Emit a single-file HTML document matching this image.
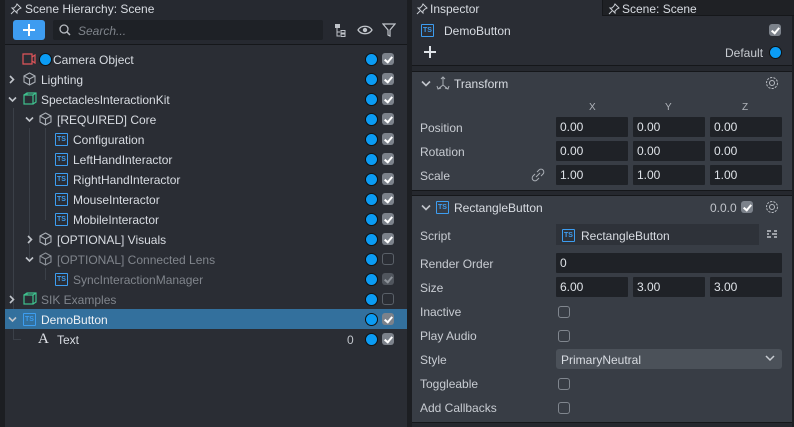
<!DOCTYPE html>
<html><head><meta charset="utf-8"><style>
*{box-sizing:border-box;margin:0;padding:0}
body{width:794px;height:427px;overflow:hidden;background:#1c1e22;font-family:"Liberation Sans",sans-serif;font-size:12px;color:#d8dce2;position:relative}
.a{position:absolute}
.t{position:absolute;white-space:nowrap;line-height:14px}
.dot{position:absolute;width:11px;height:11px;border-radius:50%;background:#0b9cf4;box-shadow:0 0 0 1px #111}
.cb{position:absolute;width:12px;height:12px;border-radius:3px;background:#7c828b}
.cb:after{content:"";position:absolute;left:4px;top:2px;width:3px;height:6px;border:solid #fff;border-width:0 2px 2px 0;transform:rotate(40deg)}
.cb.dim{background:#50555d}.cb.dim:after{border-color:#8d9299}
.cb.off{background:none;border:1.5px solid #5a6068}.cb.off:after{display:none}
.ts{position:absolute;width:13px;height:13px;border:1px solid #3d9df0;border-radius:1px;color:#3d9df0;font-size:7px;line-height:11px;text-align:center;font-weight:bold}
.f{position:absolute;height:20px;background:#1f2227;color:#dfe3e8;padding-left:4px;line-height:20px;border-radius:1px}
.lbl{position:absolute;left:420px;color:#c8ccd2}
.cbx{position:absolute;width:12px;height:12px;border:1.5px solid #80868e;border-radius:3px}
.line{position:absolute;background:#3b4048}
.tr .t{margin-top:1px}
</style></head><body>
<div class="a" style="left:5px;top:0;width:402px;height:427px;background:#2a2d34"></div>
<div class="a" style="left:5px;top:0;width:402px;height:45px;background:#262930"></div>
<div class="a" style="left:5px;top:44px;width:402px;height:1px;background:#15171a"></div>
<svg class="a" style="left:10px;top:3px" width="12" height="12" viewBox="0 0 12 12"><path d="M7 1l4 4-2 1-2 2 0 2-5-5 2 0 2-2z M1 11l3-3" fill="none" stroke="#c8ccd2" stroke-width="1"/></svg>
<div class="t" style="left:25px;top:2px;color:#d8dce2">Scene Hierarchy: Scene</div>
<div class="a" style="left:13px;top:20px;width:32px;height:20px;background:#3e9cf0;border-radius:3px"></div>
<div class="a" style="left:23px;top:29px;width:12px;height:2px;background:#fff"></div>
<div class="a" style="left:28px;top:24px;width:2px;height:12px;background:#fff"></div>
<div class="a" style="left:53px;top:20px;width:270px;height:20px;background:#1e2126;border-radius:2px"></div>
<svg class="a" style="left:59px;top:24px" width="12" height="12"><circle cx="5" cy="5" r="4" fill="none" stroke="#b8bcc2" stroke-width="1.3"/><path d="M8 8l3 3" stroke="#b8bcc2" stroke-width="1.5"/></svg>
<div class="t" style="left:78px;top:24px;color:#7f848b;font-style:italic">Search...</div>
<svg class="a" style="left:334px;top:22px" width="16" height="16"><rect x="1" y="2" width="5" height="4" fill="#c0c4ca"/><path d="M3 6v8h3M3 10h3" stroke="#c0c4ca" fill="none"/><rect x="7" y="8.5" width="4" height="2.5" fill="none" stroke="#c0c4ca"/><rect x="7" y="12" width="4" height="2.5" fill="none" stroke="#c0c4ca"/></svg>
<svg class="a" style="left:357px;top:23px" width="16" height="14"><path d="M1 7c3-5 11-5 14 0c-3 5-11 5-14 0z" fill="none" stroke="#c0c4ca" stroke-width="1.3"/><circle cx="8" cy="7" r="2.2" fill="#c0c4ca"/></svg>
<svg class="a" style="left:382px;top:23px" width="14" height="14"><path d="M1 1h12l-5 6v6l-2-1v-5z" fill="none" stroke="#c0c4ca" stroke-width="1.2"/></svg>

<div class="line" style="left:13px;top:108px;width:1px;height:232px"></div>
<div class="line" style="left:29px;top:128px;width:1px;height:132px"></div>
<div class="line" style="left:45px;top:128px;width:1px;height:92px"></div>
<div class="line" style="left:45px;top:268px;width:1px;height:12px"></div>
<div class="line" style="left:13px;top:339px;width:8px;height:1px"></div>

<div class="a" style="left:5px;top:309px;width:402px;height:20px;background:#33709d"></div>

<div class="tr">
<svg class="a" style="left:22px;top:53px" width="14" height="12"><path d="M1 1h9v10h-9z M10 4l3-2v8l-3-2" fill="none" stroke="#e0555a" stroke-width="1.2"/></svg>
<div class="dot" style="left:40px;top:54px"></div>
<div class="t" style="left:53px;top:52px">Camera Object</div>

<svg class="a" style="left:8px;top:75px" width="8" height="9"><path d="M2 1l3.5 3.5L2 8" fill="none" stroke="#c0c4ca" stroke-width="1.6"/></svg>
<svg class="a" style="left:23px;top:72px" width="13" height="14"><path d="M6.5 1l5.5 3v6l-5.5 3l-5.5-3v-6z M1 4l5.5 3l5.5-3 M6.5 7v6" fill="none" stroke="#a9aeb5" stroke-width="1.1"/></svg>
<div class="t" style="left:41px;top:72px">Lighting</div>

<svg class="a" style="left:8px;top:96px" width="9" height="7"><path d="M1 1.5l3.5 3.5L8 1.5" fill="none" stroke="#c0c4ca" stroke-width="1.6"/></svg>
<svg class="a" style="left:23px;top:92px" width="14" height="14"><rect x="1" y="3" width="9" height="9" fill="none" stroke="#3fc28f" stroke-width="1.2"/><path d="M1 3l3-2h9v9l-3 2 M10 3l3-2 M4 3v-2" fill="none" stroke="#3fc28f" stroke-width="1.2"/></svg>
<div class="t" style="left:41px;top:92px">SpectaclesInteractionKit</div>

<svg class="a" style="left:25px;top:116px" width="9" height="7"><path d="M1 1.5l3.5 3.5L8 1.5" fill="none" stroke="#c0c4ca" stroke-width="1.6"/></svg>
<svg class="a" style="left:39px;top:112px" width="13" height="14"><path d="M6.5 1l5.5 3v6l-5.5 3l-5.5-3v-6z M1 4l5.5 3l5.5-3 M6.5 7v6" fill="none" stroke="#a9aeb5" stroke-width="1.1"/></svg>
<div class="t" style="left:57px;top:112px">[REQUIRED] Core</div>

<div class="ts" style="left:55px;top:133px">TS</div><div class="t" style="left:73px;top:132px">Configuration</div>
<div class="ts" style="left:55px;top:153px">TS</div><div class="t" style="left:73px;top:152px">LeftHandInteractor</div>
<div class="ts" style="left:55px;top:173px">TS</div><div class="t" style="left:73px;top:172px">RightHandInteractor</div>
<div class="ts" style="left:55px;top:193px">TS</div><div class="t" style="left:73px;top:192px">MouseInteractor</div>
<div class="ts" style="left:55px;top:213px">TS</div><div class="t" style="left:73px;top:212px">MobileInteractor</div>

<svg class="a" style="left:26px;top:235px" width="8" height="9"><path d="M2 1l3.5 3.5L2 8" fill="none" stroke="#c0c4ca" stroke-width="1.6"/></svg>
<svg class="a" style="left:39px;top:232px" width="13" height="14"><path d="M6.5 1l5.5 3v6l-5.5 3l-5.5-3v-6z M1 4l5.5 3l5.5-3 M6.5 7v6" fill="none" stroke="#a9aeb5" stroke-width="1.1"/></svg>
<div class="t" style="left:57px;top:232px">[OPTIONAL] Visuals</div>

<svg class="a" style="left:25px;top:256px" width="9" height="7"><path d="M1 1.5l3.5 3.5L8 1.5" fill="none" stroke="#c0c4ca" stroke-width="1.6"/></svg>
<svg class="a" style="left:39px;top:252px" width="13" height="14"><path d="M6.5 1l5.5 3v6l-5.5 3l-5.5-3v-6z M1 4l5.5 3l5.5-3 M6.5 7v6" fill="none" stroke="#8a8f96" stroke-width="1.1"/></svg>
<div class="t" style="left:57px;top:252px;color:#80858c">[OPTIONAL] Connected Lens</div>
<div class="ts" style="left:55px;top:273px">TS</div><div class="t" style="left:73px;top:272px;color:#80858c">SyncInteractionManager</div>

<svg class="a" style="left:8px;top:295px" width="8" height="9"><path d="M2 1l3.5 3.5L2 8" fill="none" stroke="#c0c4ca" stroke-width="1.6"/></svg>
<svg class="a" style="left:23px;top:292px" width="14" height="14"><rect x="1" y="3" width="9" height="9" fill="none" stroke="#3fc28f" stroke-width="1.2"/><path d="M1 3l3-2h9v9l-3 2 M10 3l3-2 M4 3v-2" fill="none" stroke="#3fc28f" stroke-width="1.2"/></svg>
<div class="t" style="left:41px;top:292px;color:#80858c">SIK Examples</div>

<svg class="a" style="left:8px;top:316px" width="9" height="7"><path d="M1 1.5l3.5 3.5L8 1.5" fill="none" stroke="#c0c4ca" stroke-width="1.6"/></svg>
<div class="ts" style="left:23px;top:313px">TS</div>
<div class="t" style="left:41px;top:312px;color:#eef1f5">DemoButton</div>
<div class="t" style="left:38px;top:331px;font-family:'Liberation Serif',serif;font-size:15px;color:#e0e3e8">A</div>
<div class="t" style="left:57px;top:332px">Text</div>
<div class="t" style="left:347px;top:332px;color:#c0c4ca">0</div>
</div>

<div class="dot" style="left:366px;top:54px"></div><div class="cb" style="left:382px;top:53px"></div>
<div class="dot" style="left:366px;top:74px"></div><div class="cb" style="left:382px;top:73px"></div>
<div class="dot" style="left:366px;top:94px"></div><div class="cb" style="left:382px;top:93px"></div>
<div class="dot" style="left:366px;top:114px"></div><div class="cb" style="left:382px;top:113px"></div>
<div class="dot" style="left:366px;top:134px"></div><div class="cb" style="left:382px;top:133px"></div>
<div class="dot" style="left:366px;top:154px"></div><div class="cb" style="left:382px;top:153px"></div>
<div class="dot" style="left:366px;top:174px"></div><div class="cb" style="left:382px;top:173px"></div>
<div class="dot" style="left:366px;top:194px"></div><div class="cb" style="left:382px;top:193px"></div>
<div class="dot" style="left:366px;top:214px"></div><div class="cb" style="left:382px;top:213px"></div>
<div class="dot" style="left:366px;top:234px"></div><div class="cb" style="left:382px;top:233px"></div>
<div class="dot" style="left:366px;top:254px"></div><div class="cb off" style="left:382px;top:253px"></div>
<div class="dot" style="left:366px;top:274px"></div><div class="cb dim" style="left:382px;top:273px"></div>
<div class="dot" style="left:366px;top:294px"></div><div class="cb off" style="left:382px;top:293px"></div>
<div class="dot" style="left:366px;top:314px"></div><div class="cb" style="left:382px;top:313px"></div>
<div class="dot" style="left:366px;top:334px"></div><div class="cb" style="left:382px;top:333px"></div>

<div class="a" style="left:412px;top:0;width:380px;height:427px;background:#2a2d34"></div>
<div class="a" style="left:602px;top:0;width:192px;height:16px;background:#1f2125;border-left:1px solid #15171a;border-bottom:1px solid #15171a"></div>
<svg class="a" style="left:416px;top:3px" width="12" height="12"><path d="M7 1l4 4-2 1-2 2 0 2-5-5 2 0 2-2z M1 11l3-3" fill="none" stroke="#c8ccd2"/></svg>
<div class="t" style="left:430px;top:2px">Inspector</div>
<svg class="a" style="left:608px;top:3px" width="12" height="12"><path d="M7 1l4 4-2 1-2 2 0 2-5-5 2 0 2-2z M1 11l3-3" fill="none" stroke="#c8ccd2"/></svg>
<div class="t" style="left:622px;top:2px">Scene: Scene</div>
<div class="ts" style="left:421px;top:24px">TS</div>
<div class="t" style="left:444px;top:24px">DemoButton</div>
<div class="cb" style="left:769px;top:24px"></div>
<div class="a" style="left:424px;top:51px;width:12px;height:2px;background:#dfe3e8"></div>
<div class="a" style="left:429px;top:46px;width:2px;height:12px;background:#dfe3e8"></div>
<div class="t" style="left:725px;top:46px;color:#c8ccd2">Default</div>
<div class="dot" style="left:770px;top:47px"></div>
<div class="a" style="left:412px;top:65px;width:380px;height:7px;background:#25282e;border-top:1px solid #15171a;border-bottom:1px solid #15171a"></div>

<div class="a" style="left:412px;top:72px;width:380px;height:118px;background:#383d45"></div>
<svg class="a" style="left:421px;top:80px" width="10" height="7"><path d="M1 1.5l4 4 4-4" fill="none" stroke="#c0c4ca" stroke-width="1.6"/></svg>
<svg class="a" style="left:436px;top:76px" width="14" height="14"><path d="M7 1v8l-5 4M7 9l5 4M5 3l2-2 2 2M1 10l1 3 3-1M13 10l-1 3-3-1" fill="none" stroke="#a9aeb5" stroke-width="1"/></svg>
<div class="t" style="left:454px;top:77px">Transform</div>
<svg class="a" style="left:765px;top:76px" width="14" height="14"><circle cx="7" cy="7" r="2.5" fill="none" stroke="#b8bcc2"/><circle cx="7" cy="7" r="5.5" fill="none" stroke="#b8bcc2" stroke-dasharray="2.2 1.2"/></svg>
<div class="t" style="left:589px;top:101px;font-size:10px;color:#b0b4ba">X</div>
<div class="t" style="left:665px;top:101px;font-size:10px;color:#b0b4ba">Y</div>
<div class="t" style="left:742px;top:101px;font-size:10px;color:#b0b4ba">Z</div>
<div class="lbl t" style="top:121px">Position</div>
<div class="lbl t" style="top:145px">Rotation</div>
<div class="lbl t" style="top:169px">Scale</div>
<svg class="a" style="left:531px;top:168px" width="14" height="14"><path d="M5 9l4-4M6 4l2-2a2.5 2.5 0 0 1 4 4l-2 2M8 10l-2 2a2.5 2.5 0 0 1-4-4l2-2" fill="none" stroke="#a9aeb5"/></svg>
<div class="f" style="left:556px;top:117px;width:72px">0.00</div><div class="f" style="left:633px;top:117px;width:72px">0.00</div><div class="f" style="left:710px;top:117px;width:72px">0.00</div>
<div class="f" style="left:556px;top:141px;width:72px">0.00</div><div class="f" style="left:633px;top:141px;width:72px">0.00</div><div class="f" style="left:710px;top:141px;width:72px">0.00</div>
<div class="f" style="left:556px;top:165px;width:72px">1.00</div><div class="f" style="left:633px;top:165px;width:72px">1.00</div><div class="f" style="left:710px;top:165px;width:72px">1.00</div>
<div class="a" style="left:412px;top:190px;width:380px;height:6px;background:#25282e;border-top:1px solid #15171a;border-bottom:1px solid #15171a"></div>

<div class="a" style="left:412px;top:196px;width:380px;height:231px;background:#383d45"></div>
<div class="a" style="left:412px;top:422px;width:380px;height:5px;background:#25282e;border-top:1px solid #15171a"></div>
<svg class="a" style="left:421px;top:204px" width="10" height="7"><path d="M1 1.5l4 4 4-4" fill="none" stroke="#c0c4ca" stroke-width="1.6"/></svg>
<div class="ts" style="left:436px;top:201px">TS</div>
<div class="t" style="left:454px;top:201px">RectangleButton</div>
<div class="t" style="left:710px;top:201px;color:#c0c4ca">0.0.0</div>
<div class="cb" style="left:741px;top:201px"></div>
<svg class="a" style="left:765px;top:200px" width="14" height="14"><circle cx="7" cy="7" r="2.5" fill="none" stroke="#b8bcc2"/><circle cx="7" cy="7" r="5.5" fill="none" stroke="#b8bcc2" stroke-dasharray="2.2 1.2"/></svg>
<div class="lbl t" style="top:229px">Script</div>
<div class="a" style="left:556px;top:224px;width:203px;height:21px;background:#2e3239"></div>
<div class="ts" style="left:562px;top:229px">TS</div>
<div class="t" style="left:581px;top:229px">RectangleButton</div>
<svg class="a" style="left:766px;top:229px" width="12" height="10"><path d="M1 2h4M8 2h3M1 5h2M6 5h5M1 8h4M8 8h3" stroke="#c0c4ca" stroke-width="1.5"/></svg>
<div class="lbl t" style="top:257px">Render Order</div>
<div class="f" style="left:556px;top:253px;width:226px">0</div>
<div class="lbl t" style="top:281px">Size</div>
<div class="f" style="left:556px;top:277px;width:72px">6.00</div><div class="f" style="left:633px;top:277px;width:72px">3.00</div><div class="f" style="left:710px;top:277px;width:72px">3.00</div>
<div class="lbl t" style="top:305px">Inactive</div><div class="cbx" style="left:558px;top:306px"></div>
<div class="lbl t" style="top:329px">Play Audio</div><div class="cbx" style="left:558px;top:330px"></div>
<div class="lbl t" style="top:353px">Style</div>
<div class="a" style="left:556px;top:349px;width:226px;height:20px;background:#4b5159;border-radius:3px"></div>
<div class="t" style="left:561px;top:353px">PrimaryNeutral</div>
<svg class="a" style="left:765px;top:355px" width="10" height="7"><path d="M1 1l4 4 4-4" fill="none" stroke="#c8ccd2" stroke-width="1.5"/></svg>
<div class="lbl t" style="top:377px">Toggleable</div><div class="cbx" style="left:558px;top:378px"></div>
<div class="lbl t" style="top:401px">Add Callbacks</div><div class="cbx" style="left:558px;top:402px"></div>
</body></html>
